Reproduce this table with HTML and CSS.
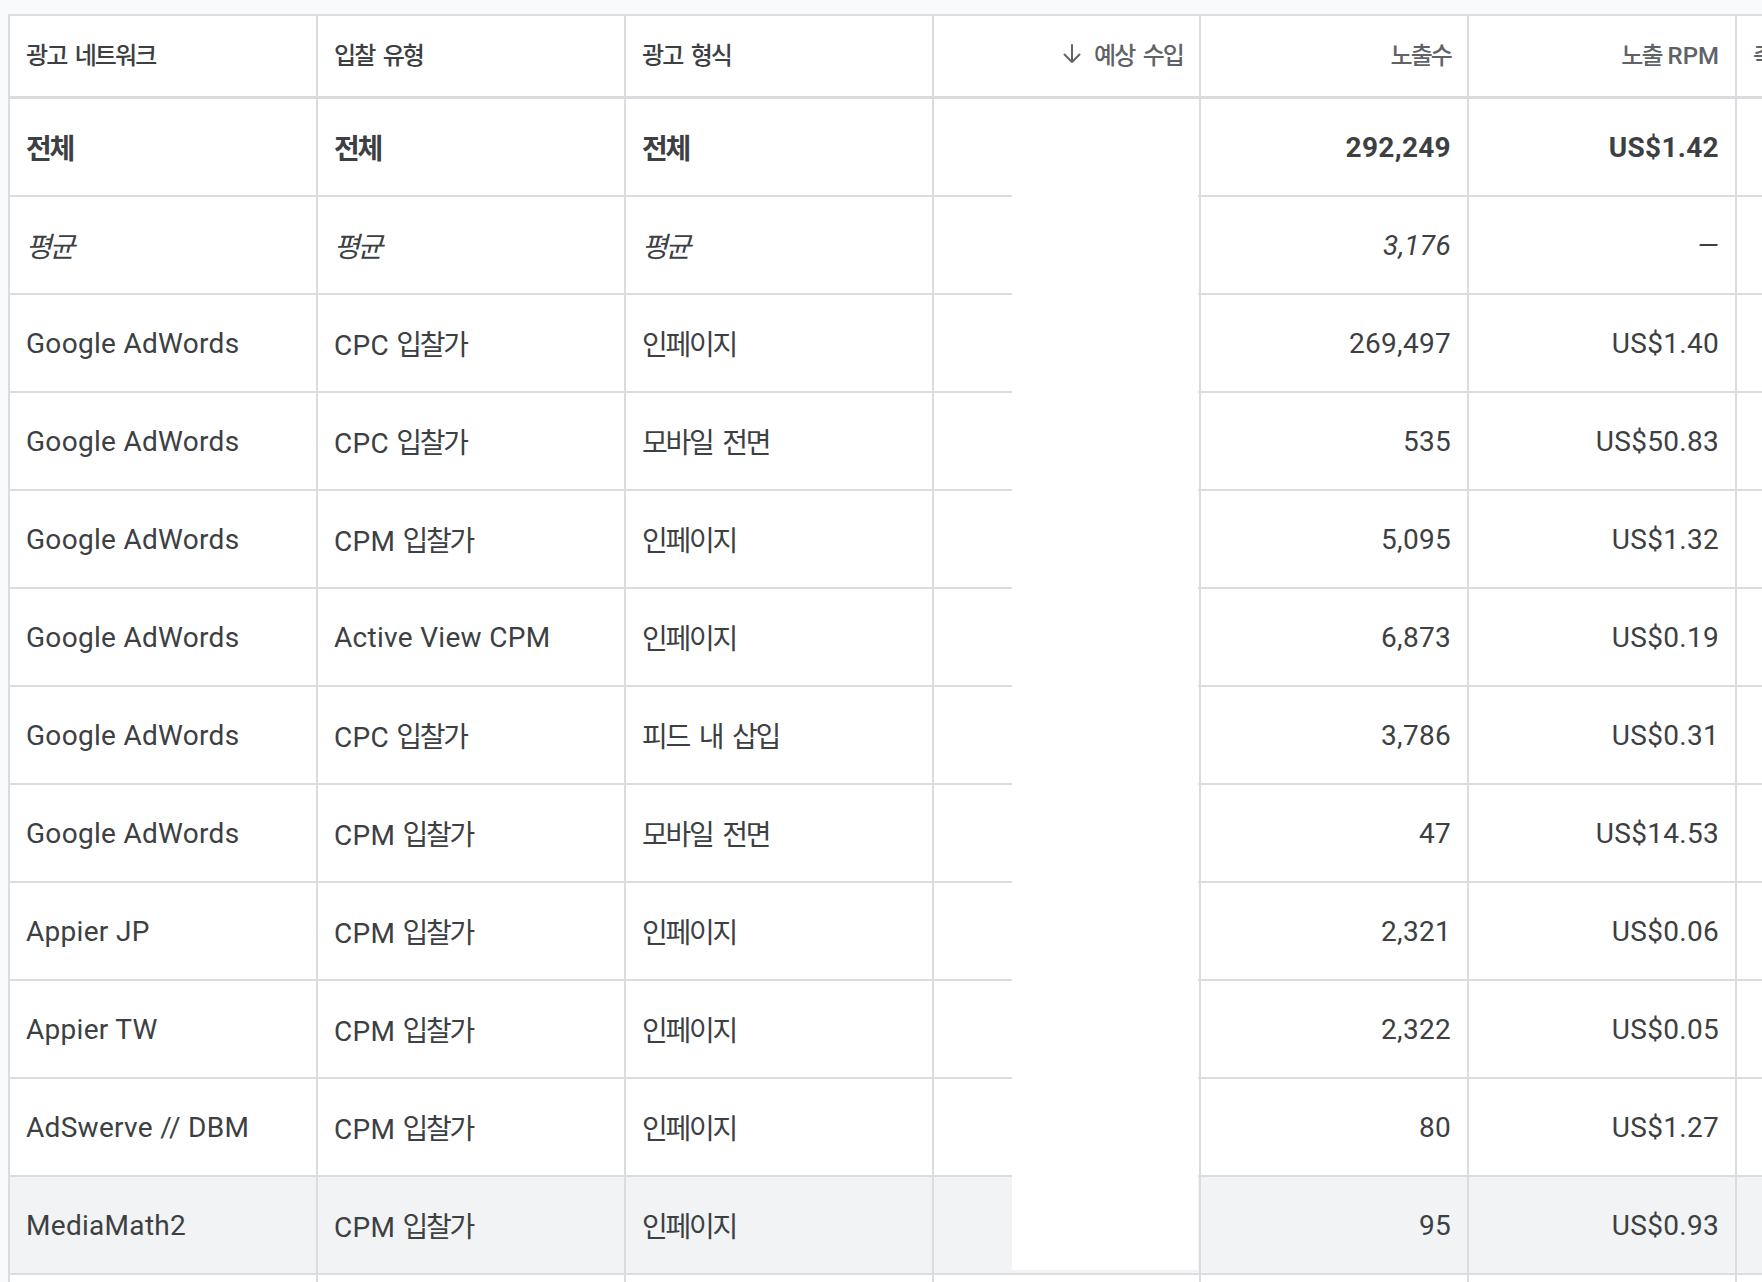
FILE: index.html
```html
<!DOCTYPE html>
<html lang="ko">
<head>
<meta charset="utf-8">
<title>광고 네트워크 보고서</title>
<link rel="stylesheet" href="styles.css">
</head>
<body>
<div class="sheet">
  <table class="report">
    <colgroup>
      <col class="c-wide"><col class="c-wide"><col class="c-wide">
      <col class="c-rev"><col class="c-num"><col class="c-num"><col class="c-num">
    </colgroup>
    <thead>
      <tr>
        <th class="dim"><span class="ko">광고 네트워크</span></th>
        <th class="dim"><span class="ko">입찰 유형</span></th>
        <th class="dim"><span class="ko">광고 형식</span></th>
        <th class="num metric"><span class="sort"><svg class="arrow" width="20" height="22" viewBox="0 0 20 22" aria-hidden="true"><path d="M10 2v17M2.5 11.5L10 19l7.5-7.5" fill="none" stroke="#5f6368" stroke-width="2" stroke-linecap="round" stroke-linejoin="round"/></svg><span class="ko">예상 수입</span></span></th>
        <th class="num metric"><span class="ko">노출수</span></th>
        <th class="num metric"><span class="ko">노출</span> RPM</th>
        <th class="metric clip"><span class="ko">측정 가능한 노출수 비율</span></th>
      </tr>
    </thead>
    <tbody>
      <tr class="total">
        <td><span class="ko">전체</span></td><td><span class="ko">전체</span></td><td><span class="ko">전체</span></td>
        <td class="num"></td><td class="num">292,249</td><td class="num">US$1.42</td><td></td>
      </tr>
      <tr class="avg">
        <td><span class="ko">평균</span></td><td><span class="ko">평균</span></td><td><span class="ko">평균</span></td>
        <td class="num"></td><td class="num">3,176</td><td class="num">—</td><td></td>
      </tr>
      <tr>
        <td>Google AdWords</td><td>CPC <span class="ko">입찰가</span></td><td><span class="ko">인페이지</span></td>
        <td class="num"></td><td class="num">269,497</td><td class="num">US$1.40</td><td></td>
      </tr>
      <tr>
        <td>Google AdWords</td><td>CPC <span class="ko">입찰가</span></td><td><span class="ko">모바일 전면</span></td>
        <td class="num"></td><td class="num">535</td><td class="num">US$50.83</td><td></td>
      </tr>
      <tr>
        <td>Google AdWords</td><td>CPM <span class="ko">입찰가</span></td><td><span class="ko">인페이지</span></td>
        <td class="num"></td><td class="num">5,095</td><td class="num">US$1.32</td><td></td>
      </tr>
      <tr>
        <td>Google AdWords</td><td>Active View CPM</td><td><span class="ko">인페이지</span></td>
        <td class="num"></td><td class="num">6,873</td><td class="num">US$0.19</td><td></td>
      </tr>
      <tr>
        <td>Google AdWords</td><td>CPC <span class="ko">입찰가</span></td><td><span class="ko">피드 내 삽입</span></td>
        <td class="num"></td><td class="num">3,786</td><td class="num">US$0.31</td><td></td>
      </tr>
      <tr>
        <td>Google AdWords</td><td>CPM <span class="ko">입찰가</span></td><td><span class="ko">모바일 전면</span></td>
        <td class="num"></td><td class="num">47</td><td class="num">US$14.53</td><td></td>
      </tr>
      <tr>
        <td>Appier JP</td><td>CPM <span class="ko">입찰가</span></td><td><span class="ko">인페이지</span></td>
        <td class="num"></td><td class="num">2,321</td><td class="num">US$0.06</td><td></td>
      </tr>
      <tr>
        <td>Appier TW</td><td>CPM <span class="ko">입찰가</span></td><td><span class="ko">인페이지</span></td>
        <td class="num"></td><td class="num">2,322</td><td class="num">US$0.05</td><td></td>
      </tr>
      <tr>
        <td>AdSwerve // DBM</td><td>CPM <span class="ko">입찰가</span></td><td><span class="ko">인페이지</span></td>
        <td class="num"></td><td class="num">80</td><td class="num">US$1.27</td><td></td>
      </tr>
      <tr class="hover">
        <td>MediaMath2</td><td>CPM <span class="ko">입찰가</span></td><td><span class="ko">인페이지</span></td>
        <td class="num"></td><td class="num">95</td><td class="num">US$0.93</td><td></td>
      </tr>
      <tr>
        <td></td><td></td><td></td><td class="num"></td><td class="num"></td><td class="num"></td><td></td>
      </tr>
    </tbody>
  </table>
  <div class="redact"></div>
</div>
</body>
</html>
```
FILE: styles.css
```css
html, body {
  margin: 0;
  background: #f8f9fa;
  overflow: hidden;
}

.sheet {
  position: relative;
  padding: 14px 0 0 8px;
  font-family: Roboto, "Noto Sans CJK KR", sans-serif;
  color: #3c4043;
}

.report {
  border-collapse: separate;
  border-spacing: 0;
  table-layout: fixed;
  width: 1997px;
  background: #ffffff;
  border-top: 2px solid #dadce0;
  border-left: 2px solid #dadce0;
}

.c-wide { width: 308px; }
.c-rev { width: 267px; }
.c-num { width: 268px; }

.report th,
.report td {
  padding: 0 16px;
  border-right: 2px solid #dadce0;
  border-bottom: 2px solid #dadce0;
  white-space: nowrap;
  overflow: hidden;
  vertical-align: middle;
  text-align: left;
}

.report thead tr { height: 83px; }
.report tbody tr { height: 98px; }

.report th {
  border-bottom-width: 3px;
  padding-bottom: 5px;
  font-size: 24px;
  font-weight: 500;
  color: #3c4043;
}

.report th.metric { color: #5f6368; }

.report td {
  font-size: 28px;
  font-weight: 400;
  letter-spacing: 0.3px;
}

.report .num { text-align: right; }
.report th.clip { text-align: left; }

.ko {
  letter-spacing: -0.08em;
  word-spacing: 0.18em;
}

.sort {
  display: inline-flex;
  align-items: center;
  gap: 12px;
}

.arrow { display: block; }

.total td { font-weight: 700; }
.avg td { font-style: italic; }

.hover td { background: #f1f3f4; }

.redact {
  position: absolute;
  left: 1012px;
  top: 99px;
  width: 186px;
  height: 1171px;
  background: #ffffff;
}
```
